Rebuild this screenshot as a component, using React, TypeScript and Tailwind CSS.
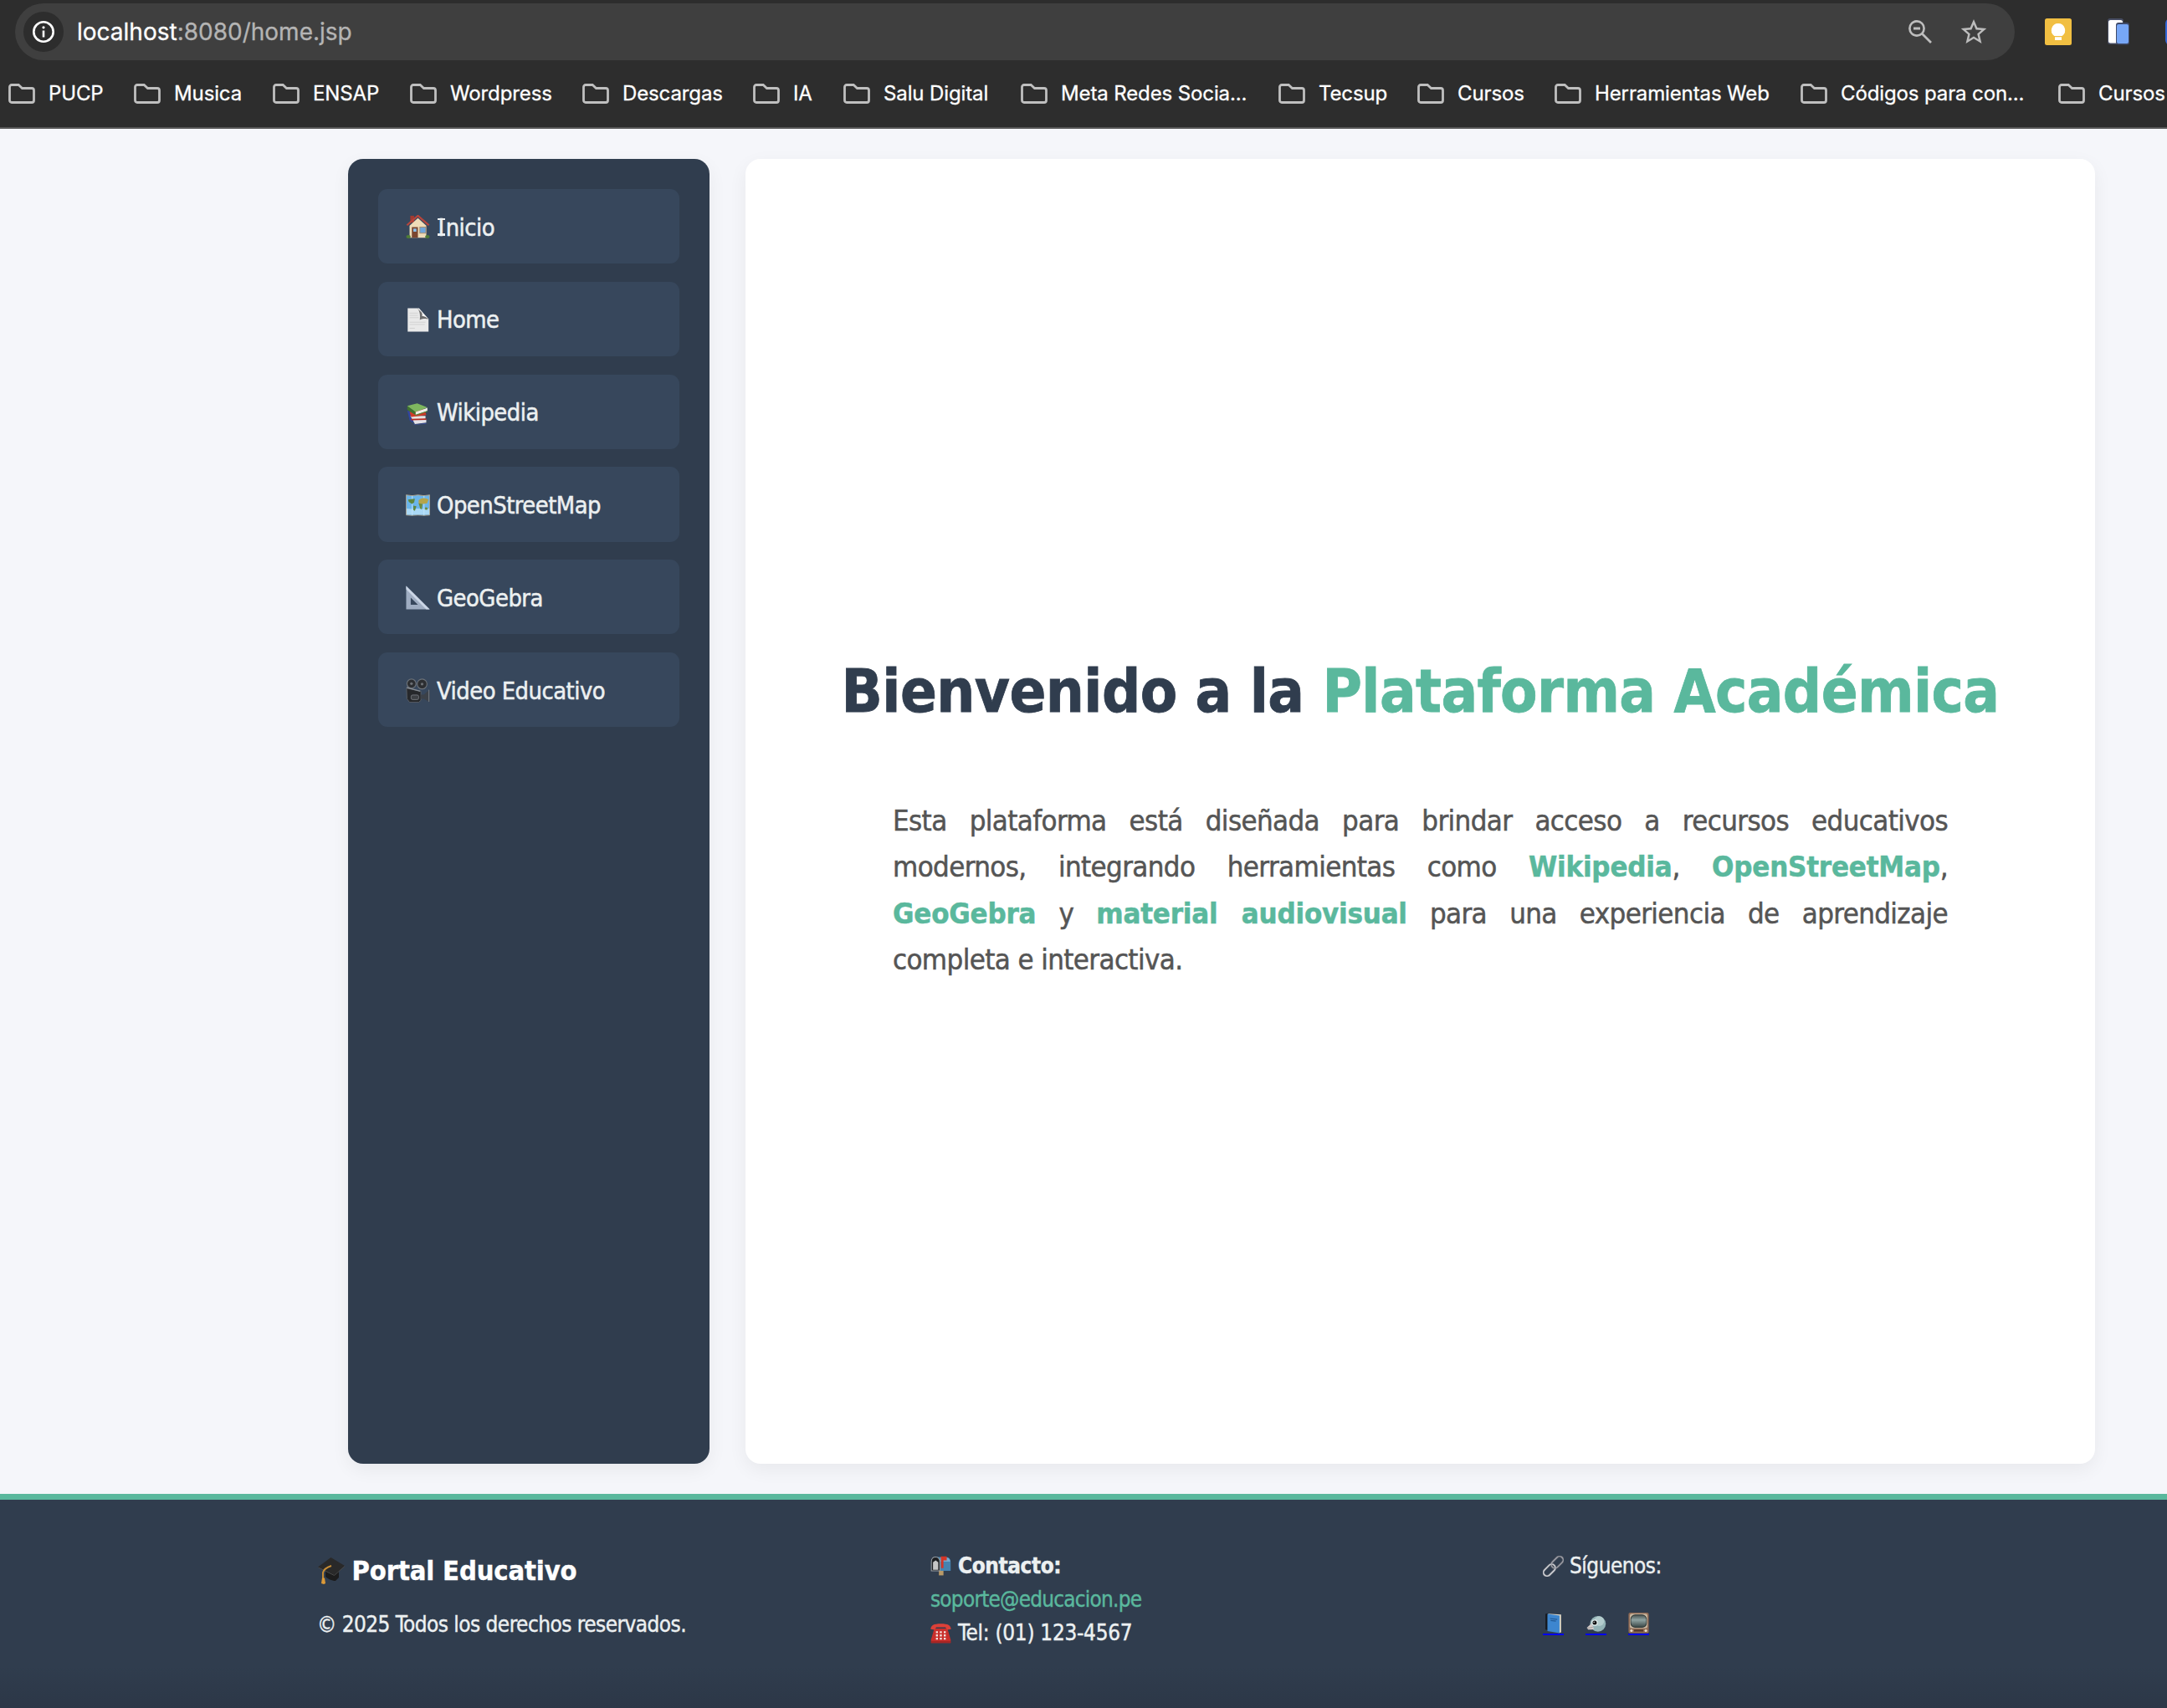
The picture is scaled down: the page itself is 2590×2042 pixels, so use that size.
import type { ReactNode } from "react";

type IconProps = { className?: string };

function Glyph({ className, children }: IconProps & { children: ReactNode }) {
  return (
    <svg viewBox="0 0 32 32" className={className} aria-hidden="true">
      {children}
    </svg>
  );
}

function House({ className }: IconProps) {
  return (
    <Glyph className={className}>
      <rect x="6" y="1" width="5" height="9" fill="#a33a30" />
      <path d="M5 14 16 4l11 10v16H5z" fill="#efdcb8" />
      <path d="M1.500 13.500 16 1l14.500 12.500" fill="none" stroke="#b8463c" strokeWidth="2.400" />
      <rect x="8" y="16" width="8" height="14" fill="#7a4630" />
      <rect x="10" y="18" width="4" height="4" fill="#8cc4ee" />
      <rect x="18.500" y="16" width="8" height="8" fill="#6fa6dc" stroke="#a98a68" />
      <ellipse cx="3.500" cy="28.800" rx="3" ry="2.200" fill="#4f7d35" />
      <ellipse cx="28.500" cy="28.800" rx="3" ry="2.200" fill="#4f7d35" />
    </Glyph>
  );
}

function Page({ className }: IconProps) {
  return (
    <Glyph className={className}>
      <path d="M2.500.500h15L30 15v16.500H2.500z" fill="#e9e9e9" />
      <path d="M5 7h11M5 10h11M5 13h12M5 19h21M5 22h20M5 27h7" stroke="#cfcfcf" strokeWidth="1" />
      <path d="M15 .500c4 4 4 9 3.500 15.500 4-2 8-2 11.500-1z" fill="#6d6d6d" />
      <path d="M17 .500c4 4 5 6 4.500 10.500 3 0 6 1.500 8.500 4z" fill="#f4f4f4" />
    </Glyph>
  );
}

function Books({ className }: IconProps) {
  return (
    <Glyph className={className}>
      <path d="M9 25 27 25v4L12 31z" fill="#e3e3ea" />
      <path d="M10 29 12 31.500 27 29.500v1.200L11 32z" fill="#3a4c9c" />
      <path d="M2 13l3 13 5 3.500-3-15z" fill="#2f46a0" />
      <path d="M6 20 26 20v4L9 25.500z" fill="#e9e5e2" />
      <path d="M5 15 25 11l2 8-20 2.500z" fill="#cf3b28" />
      <path d="M7 25 27 24.500" stroke="#b42c22" strokeWidth="2" />
      <path d="M2 7v5l11 7V15z" fill="#3f7430" />
      <path d="M2 7 15 3.500 28.500 9 13 15z" fill="#7fb75f" />
      <path d="M13 15l15.500-5.500v4L13 19z" fill="#f0efe8" />
      <path d="M13 19 28.500 14" stroke="#4a8438" strokeWidth="1.200" />
    </Glyph>
  );
}

function WorldMap({ className }: IconProps) {
  return (
    <Glyph className={className}>
      <path d="M.500 3 8.500 4 16 3l8 1 7.500-1v26.500L24 30l-8-.500L8 30 .500 29.500z" fill="#6bb5ea" stroke="#b3a58a" />
      <path d="M1 21l7 .500 8-.500 8 .500 7-.500v8H1z" fill="#a9d8f5" />
      <path d="M8.500 4v26M24 4v26" stroke="#c5e6fa" strokeWidth="1" />
      <path d="M3 9l9-1-1 5-3 2-4-3zM10 17l4 1-2 6-2-1z" fill="#5f873f" />
      <path d="M17 10c5-4 9-3 13-1l-2 5-5 1-6 0z" fill="#b5a54a" />
      <path d="M17 14l5 1-1 7-2-1zM26 19l3 1-1 3-3-1z" fill="#6c8b3c" />
    </Glyph>
  );
}

function Triangle({ className }: IconProps) {
  return (
    <Glyph className={className}>
      <path fillRule="evenodd" d="M.500.500 31.500 31.500H.500zM6.500 16v9.500H16z" fill="#9fadc2" />
      <path d="M.500.500 31.500 31.500H27L.500 5z" fill="#cbd6e6" />
    </Glyph>
  );
}

function Camera({ className }: IconProps) {
  return (
    <Glyph className={className}>
      <circle cx="7.500" cy="7" r="6" fill="#2c2e31" stroke="#6b7178" strokeWidth="1.300" />
      <circle cx="21.500" cy="7.500" r="6.500" fill="#2c2e31" stroke="#6b7178" strokeWidth="1.300" />
      <circle cx="7.500" cy="7" r="1.800" fill="#6c7075" />
      <circle cx="21.500" cy="7.500" r="1.800" fill="#6c7075" />
      <path d="M1 13 20 17v12l-3 2.500H5L1.500 27z" fill="#26282b" stroke="#5b6067" />
      <path d="M1 12 19 17" stroke="#888d93" strokeWidth="1.500" />
      <rect x="7" y="22" width="10" height="6" rx="2" fill="#3d4044" stroke="#777b80" />
      <path d="M20 21.500h4l7.500-7V31.500L24 27h-4z" fill="#3c4148" />
      <path d="M30.500 15v16" stroke="#7c838b" strokeWidth="1" />
    </Glyph>
  );
}

function Cap({ className }: IconProps) {
  return (
    <Glyph className={className}>
      <path d="M9 14v9c3 3 9 5 12 5l4-4V13z" fill="#1c1c1c" />
      <path d="M0 11.500 15.500 0 32 10 19.500 21z" fill="#292929" />
      <path d="M.500 12 19.500 21.500 32 10.500" fill="none" stroke="#484848" strokeWidth="1" />
      <path d="M16 10c-6 2-9 4-10 8v8" fill="none" stroke="#c98e35" strokeWidth="1.900" />
      <path d="M5 24.500h3l1 6.500-2 1-3-1z" fill="#dc9a38" />
    </Glyph>
  );
}

function Mailbox({ className }: IconProps) {
  return (
    <Glyph className={className}>
      <path d="M13 22h7v8h-7z" fill="#b89a68" />
      <path d="M8 2h16c5 0 7 4 7 9v12H8z" fill="#4583b1" />
      <path d="M15 3h9c4 0 6 2.500 6.500 6H15z" fill="#74abd0" />
      <path d="M1.500 23V9C1.500 4 4 2 8 2s6.500 3 6.500 8v13z" fill="#1c1e21" stroke="#9aa0a6" strokeWidth="1.300" />
      <path d="M4 21.500V10l4-3 4 3v11.500z" fill="#c6c6c6" />
      <path d="M16 1h9v6h-5v12h-3.500z" fill="#d33527" />
    </Glyph>
  );
}

function Phone({ className }: IconProps) {
  return (
    <Glyph className={className}>
      <path d="M6 9h20l5 17v5H1v-5z" fill="#c92f2c" />
      <path d="M1 28h30v3H1z" fill="#a82523" />
      <path d="M.500 10C.500 4 5 1.500 16 1.500S31.500 4 31.500 10l-6 1-2.500-4H9l-2.500 4z" fill="#dc4038" />
      <path
        d="M8.500 13h3v3h-3zM14.500 13h3v3h-3zM20.500 13h3v3h-3zM8.500 18h3v3h-3zM14.500 18h3v3h-3zM20.500 18h3v3h-3zM8.500 23h3v3h-3zM14.500 23h3v3h-3zM20.500 23h3v3h-3z"
        fill="#f3e4e0"
      />
    </Glyph>
  );
}

function Link({ className }: IconProps) {
  return (
    <Glyph className={className}>
      <g fill="none" transform="rotate(-45 16 16)">
        <rect x="-3" y="10.500" width="21" height="11" rx="5.500" stroke="#6f7279" strokeWidth="3.400" />
        <rect x="14" y="10.500" width="21" height="11" rx="5.500" stroke="#5b5e66" strokeWidth="3.400" />
        <rect x="-3" y="10.500" width="21" height="11" rx="5.500" stroke="#d9dbe0" strokeWidth="1.700" />
        <rect x="14" y="10.500" width="21" height="11" rx="5.500" stroke="#a5a8b2" strokeWidth="1.500" />
      </g>
    </Glyph>
  );
}

function BlueBook({ className }: IconProps) {
  return (
    <Glyph className={className}>
      <path d="M4 2 8 1v26l-4-1z" fill="#15181d" />
      <path d="M8 1.500 28 3v27l-3 1z" fill="#d9d4c4" />
      <path d="M7 2 25.500 4.500v27L7 28z" fill="#3d86cf" />
      <path d="M11 9l11 1.500M12 12l8 1" stroke="#235a95" strokeWidth="1.500" />
    </Glyph>
  );
}

function Bird({ className }: IconProps) {
  return (
    <Glyph className={className}>
      <circle cx="19" cy="17" r="12" fill="#93b3b6" />
      <circle cx="21" cy="13" r="7.500" fill="#b3cccd" />
      <path d="M9 16.500 2 23l2 3c4 0 7 0 9-1.500z" fill="#d5cdca" />
      <path d="M3 23.500c3 0 5-.500 8-1" stroke="#8c8686" fill="none" />
      <circle cx="14" cy="15.500" r="5" fill="#dce8e8" />
      <circle cx="14" cy="15.500" r="3.200" fill="#141414" />
      <circle cx="13" cy="14.500" r=".900" fill="#fff" />
    </Glyph>
  );
}

function Television({ className }: IconProps) {
  return (
    <Glyph className={className}>
      <defs>
        <linearGradient id="tube" x1="0" y1="0" x2="0" y2="1">
          <stop offset="0" stopColor="#4c5857" />
          <stop offset="0.400" stopColor="#8fa3a2" />
          <stop offset="1" stopColor="#3b4847" />
        </linearGradient>
      </defs>
      <rect x=".500" y="0" width="31" height="31.500" rx="2.500" fill="#8f6a54" />
      <rect x="2.500" y="1.500" width="27" height="22.500" rx="3" fill="#c6b59e" />
      <rect x="3.500" y="3" width="25" height="20" rx="7" fill="#2b3534" />
      <rect x="4.500" y="4" width="23" height="18" rx="6.500" fill="url(#tube)" />
      <path d="M9 27.500h14" stroke="#4d3327" strokeWidth="2.600" />
      <circle cx="5" cy="27.500" r="2" fill="#e8dccb" />
      <circle cx="27" cy="27.500" r="2" fill="#e8dccb" />
    </Glyph>
  );
}

function Folder() {
  return (
    <svg viewBox="0 0 32 24" className="h-6 w-8 shrink-0" aria-hidden="true">
      <path
        d="M1.500 4a2.500 2.500 0 0 1 2.500-2.500h8.200l4.300 4H28A2.500 2.500 0 0 1 30.500 8v12a2.500 2.500 0 0 1-2.500 2.500H4A2.500 2.500 0 0 1 1.500 20z"
        fill="none"
        stroke="#bfbfbf"
        strokeWidth="2.800"
      />
    </svg>
  );
}

const bookmarks: { label: string; width: string }[] = [
  { label: "PUCP", width: "w-[150px]" },
  { label: "Musica", width: "w-[166px]" },
  { label: "ENSAP", width: "w-[164px]" },
  { label: "Wordpress", width: "w-[206px]" },
  { label: "Descargas", width: "w-[204px]" },
  { label: "IA", width: "w-[108px]" },
  { label: "Salu Digital", width: "w-[212px]" },
  { label: "Meta Redes Socia...", width: "w-[308px]" },
  { label: "Tecsup", width: "w-[166px]" },
  { label: "Cursos", width: "w-[164px]" },
  { label: "Herramientas Web", width: "w-[294px]" },
  { label: "Códigos para con...", width: "w-[308px]" },
  { label: "Cursos", width: "w-[164px]" },
];

function BrowserBar() {
  return (
    <header className="flex h-[154px] flex-col overflow-hidden border-b-2 border-[#585858] bg-[#2d2d2d] font-[Inter,sans-serif]">
      <div className="flex w-[2640px] items-center pt-1 pl-[18px]">
        <div className="flex h-[68px] w-[2390px] items-center rounded-full bg-[#3f3f3f] pr-[33px] pl-[10px]">
          <div className="flex size-12 items-center justify-center rounded-full bg-[#2d2d2d]">
            <svg viewBox="0 0 28 28" className="size-7" aria-hidden="true">
              <circle cx="14" cy="14" r="11.700" fill="none" stroke="#fff" strokeWidth="2.600" />
              <path d="M14 12.500v8" stroke="#fff" strokeWidth="2.600" />
              <circle cx="14" cy="8.800" r="1.600" fill="#fff" />
            </svg>
          </div>
          <div className="ml-[16px] text-[28px] leading-10 text-white [-webkit-text-stroke:0.300px]">
            localhost<span className="text-[#b4b4b4]">:8080/home.jsp</span>
          </div>
          <svg viewBox="0 0 28 28" className="ml-auto size-7" aria-hidden="true">
            <circle cx="10" cy="10" r="8.600" fill="none" stroke="#bdbdbd" strokeWidth="2.600" />
            <path d="M6 10h8M16 16l11 11" stroke="#bdbdbd" strokeWidth="2.800" fill="none" />
          </svg>
          <svg viewBox="2 2 20 19" className="mb-[2px] ml-[34px] h-[29px] w-[32px]" aria-hidden="true">
            <path
              fill="#bdbdbd"
              d="m22 9.240-7.190-.620L12 2 9.190 8.630 2 9.240l5.460 4.730L5.820 21 12 17.270 18.180 21l-1.630-7.030zM12 15.400l-3.760 2.270 1-4.280-3.320-2.880 4.380-.380L12 6.100l1.710 4.040 4.380.380-3.320 2.880 1 4.280z"
            />
          </svg>
        </div>
        <svg viewBox="0 0 32 32" className="ml-[36px] size-8" aria-hidden="true">
          <rect width="32" height="32" rx="2.500" fill="#f1bf42" />
          <path d="M16 6a8.200 8.200 0 0 1 4.700 14.900H11.300A8.200 8.200 0 0 1 16 6zM12 22.300h8v3.700h-8z" fill="#fff" />
        </svg>
        <svg viewBox="0 0 26 32" className="ml-[43px] h-8 w-[26px]" aria-hidden="true">
          <rect x="0" y="0" width="19" height="31" rx="3" fill="#474d63" />
          <rect x="1" y="2" width="17" height="27.500" rx="2.500" fill="#fff" />
          <rect x="10" y="5" width="16" height="26.500" rx="3" fill="#3f4a68" />
          <rect x="11" y="7" width="14" height="23" rx="2" fill="#77a7f7" />
        </svg>
        <div className="ml-[43px] size-8 rounded-md bg-[#3367d6]" />
      </div>
      <nav className="flex w-[2640px] items-center pt-[28px] pl-[10px]">
        {bookmarks.map((item, index) => (
          <div key={index} className={`flex h-6 shrink-0 items-center gap-[16px] ${item.width}`}>
            <Folder />
            <span className="text-[24px] leading-6 tracking-[-0.120px] whitespace-nowrap text-white [-webkit-text-stroke:0.300px]">
              {item.label}
            </span>
          </div>
        ))}
      </nav>
    </header>
  );
}

const slabI = (
  <span className="relative mr-[2px] ml-[1.500px] before:absolute before:top-[6.500px] before:left-[-0.500px] before:h-[2.400px] before:w-[9px] before:bg-[#ecf0f1] after:absolute after:bottom-[6.800px] after:left-[-0.500px] after:h-[2.400px] after:w-[9px] after:bg-[#ecf0f1]">
    I
  </span>
);

const links: { id: string; label: ReactNode; icon: (p: IconProps) => ReactNode }[] = [
  { id: "inicio", label: <>{slabI}nicio</>, icon: House },
  { id: "home", label: "Home", icon: Page },
  { id: "wikipedia", label: "Wikipedia", icon: Books },
  { id: "map", label: "OpenStreetMap", icon: WorldMap },
  { id: "geogebra", label: "GeoGebra", icon: Triangle },
  { id: "video", label: "Video Educativo", icon: Camera },
];

function Sidebar() {
  return (
    <aside className="flex w-[432px] flex-col gap-[21.600px] rounded-[18px] bg-[#303d4e] p-[36px] shadow-[0_7px_22px_rgba(0,0,0,0.06)]">
      {links.map(({ id, label, icon: Icon }) => (
        <a
          key={id}
          className="flex h-[89.200px] items-center rounded-[11px] bg-[#37475c] pl-[33px] text-[28.800px] tracking-[-0.500px] text-[#ecf0f1] [-webkit-text-stroke:0.500px]"
        >
          <Icon className="mt-[2px] size-[29px]" />
          <span className="mt-[2px] ml-[8px] leading-[34px]">{label}</span>
        </a>
      ))}
    </aside>
  );
}

function Accent({ children }: { children: ReactNode }) {
  return <strong className="font-bold tracking-[-0.230px] text-[#5ab89d]">{children}</strong>;
}

function Footer() {
  return (
    <footer className="h-[256px] border-t-[7px] border-[#5ab89d] bg-linear-to-b from-[#303d4e] from-80% to-[#2c3747] pl-[380px] text-[25.920px] text-[#ecf0f1] [-webkit-text-stroke:0.400px]">
      <div className="grid w-[2160px] grid-cols-3 gap-[36px] leading-10 tracking-[-0.480px]">
        <div className="pt-[65px]">
          <h3 className="flex h-10 items-center text-[32.400px] font-bold tracking-[-0.120px] text-white">
            <Cap className="size-8" />
            <span className="ml-[8.500px]">Portal Educativo</span>
          </h3>
          <p className="mt-6 -ml-px tracking-[-0.520px]">© 2025 Todos los derechos reservados.</p>
        </div>
        <div className="pt-[59px]">
          <p className="flex items-center font-bold tracking-[-0.400px]">
            <Mailbox className="mt-px size-[25px]" />
            <span className="ml-[8px]">Contacto:</span>
          </p>
          <p className="tracking-[-0.770px] text-[#5ab89d]">soporte@educacion.pe</p>
          <p className="flex items-center tracking-[-0.280px]">
            <Phone className="size-[25px]" />
            <span className="ml-[8px]">Tel: (01) 123-4567</span>
          </p>
        </div>
        <div className="pt-[59px]">
          <p className="flex items-center">
            <Link className="size-[25px]" />
            <span className="ml-[7px]">Síguenos:</span>
          </p>
          <div className="mt-[36px] flex gap-[26px]">
            <a className="border-b-2 border-[#0000ee]">
              <BlueBook className="size-[25px]" />
            </a>
            <a className="border-b-2 border-[#0000ee]">
              <Bird className="size-[25px]" />
            </a>
            <a className="border-b-2 border-[#0000ee]">
              <Television className="size-[25px]" />
            </a>
          </div>
        </div>
      </div>
    </footer>
  );
}

export default function App() {
  return (
    <div className="h-[2042px] w-[2590px] overflow-hidden bg-[#f5f6fa] font-['DejaVu_Sans_Condensed','DejaVu_Sans',sans-serif]">
      <BrowserBar />
      <div className="flex h-[1632px] gap-[43px] py-[36px] pl-[416px]">
        <Sidebar />
        <main className="flex w-[1613px] flex-col items-center rounded-[18px] bg-white pt-[594px] shadow-[0_7px_22px_rgba(0,0,0,0.06)]">
          <h1 className="text-[72px] leading-[84px] font-bold tracking-[-0.580px] whitespace-nowrap text-[#303d4e] [-webkit-text-stroke:0.800px]">
            Bienvenido a la <span className="text-[#5ab89d]">Plataforma Académica</span>
          </h1>
          <p className="mt-[86.200px] w-[1261px] text-justify text-[34.560px] leading-[1.600] tracking-[-0.620px] text-[#555] [-webkit-text-stroke:0.500px]">
            Esta plataforma está diseñada para brindar acceso a recursos educativos modernos, integrando herramientas
            como <Accent>Wikipedia</Accent>, <Accent>OpenStreetMap</Accent>, <Accent>GeoGebra</Accent> y{" "}
            <Accent>material audiovisual</Accent> para una experiencia de aprendizaje completa e interactiva.
          </p>
        </main>
      </div>
      <Footer />
    </div>
  );
}
